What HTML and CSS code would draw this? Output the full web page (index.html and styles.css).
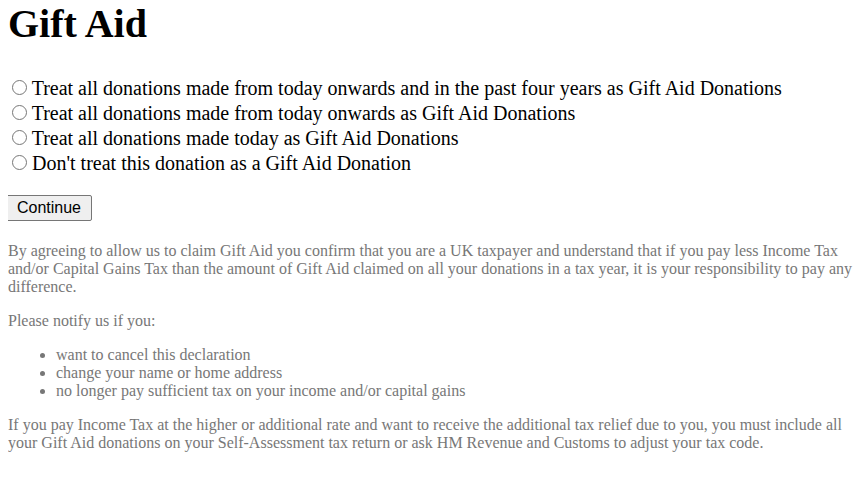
FILE: index.html
```html
<!DOCTYPE html>
<html lang="en">
<head>
<meta charset="utf-8">
<title>Gift Aid</title>
<link rel="stylesheet" href="styles.css">
</head>
<body>
<h1 class="title">Gift Aid</h1>
<form class="form">
  <div class="options">
    <label class="option"><input type="radio" name="giftaid" class="radio"> Treat all donations made from today onwards and in the past four years as Gift Aid Donations</label>
    <label class="option"><input type="radio" name="giftaid" class="radio"> Treat all donations made from today onwards as Gift Aid Donations</label>
    <label class="option"><input type="radio" name="giftaid" class="radio"> Treat all donations made today as Gift Aid Donations</label>
    <label class="option"><input type="radio" name="giftaid" class="radio"> Don't treat this donation as a Gift Aid Donation</label>
  </div>
  <button type="button" class="continue">Continue</button>
</form>
<div class="notes">
  <p class="note">By agreeing to allow us to claim Gift Aid you confirm that you are a UK taxpayer and understand that if you pay less Income Tax and/or Capital Gains Tax than the amount of Gift Aid claimed on all your donations in a tax year, it is your responsibility to pay any difference.</p>
  <p class="note">Please notify us if you:</p>
  <ul class="list">
    <li>want to cancel this declaration</li>
    <li>change your name or home address</li>
    <li>no longer pay sufficient tax on your income and/or capital gains</li>
  </ul>
  <p class="note">If you pay Income Tax at the higher or additional rate and want to receive the additional tax relief due to you, you must include all your Gift Aid donations on your Self-Assessment tax return or ask HM Revenue and Customs to adjust your tax code.</p>
</div>
</body>
</html>
```
FILE: styles.css
```css
html, body {
  background: #fff;
}
body {
  margin: 0 8px;
  font-family: "Liberation Serif", "Times New Roman", serif;
  font-size: 16px;
  color: #000;
}
.title {
  font-size: 40px;
  font-weight: bold;
  margin: 0 0 29px 0;
}
.form {
  margin: 0;
}
.options {
  display: flex;
  flex-direction: column;
  font-size: 20px;
  margin-bottom: 19px;
}
.option {
  display: block;
  line-height: 25px;
}
.radio {
  width: 15px;
  height: 15px;
  margin: 3px 0 0 4px;
}
.continue {
  display: block;
  box-sizing: border-box;
  width: 86px;
  height: 26px;
  font-family: "Liberation Sans", Arial, sans-serif;
  font-size: 16px;
  padding: 0;
  margin: 0 0 0 -2px;
  background: #efefef;
  border: 1px solid #767676;
  border-radius: 2px;
  color: #000;
}
.notes {
  color: #777;
  font-size: 16px;
  margin-top: 21px;
}
.note {
  margin: 0 0 16px 0;
  line-height: 18px;
}
.list {
  margin: 0 0 16px 0;
  padding-left: 48px;
  line-height: 18px;
}
```
